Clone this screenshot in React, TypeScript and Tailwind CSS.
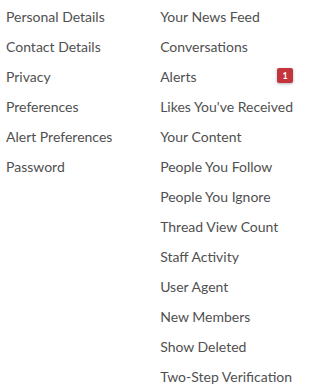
const left = [
  "Personal Details",
  "Contact Details",
  "Privacy",
  "Preferences",
  "Alert Preferences",
  "Password",
];

const right = [
  "Your News Feed",
  "Conversations",
  "Alerts",
  "Likes You've Received",
  "Your Content",
  "People You Follow",
  "People You Ignore",
  "Thread View Count",
  "Staff Activity",
  "User Agent",
  "New Members",
  "Show Deleted",
  "Two-Step Verification",
];

export default function App() {
  return (
    <div
      className="w-[300px] h-[390px] bg-white flex text-[14px] text-[#505050] whitespace-nowrap"
      style={{ fontFamily: "Lato, 'Noto Sans', sans-serif" }}
    >
      <ul className="w-[155px] pt-[1px]">
        {left.map((item) => (
          <li key={item} className="h-[30px] flex items-center pl-[6px]">
            {item}
          </li>
        ))}
      </ul>
      <ul className="flex-1 pt-[1px] pr-[7px]">
        {right.map((item) => (
          <li key={item} className="h-[30px] flex items-center justify-between pl-[6px]">
            <span>{item}</span>
            {item === "Alerts" && (
              <span className="w-[16px] h-[15px] mt-[-1px] rounded-[2px] bg-[#c4343c] text-white text-[9px] font-bold flex items-center justify-center shadow-[0_1px_3px_rgba(0,0,0,0.3)]">
                1
              </span>
            )}
          </li>
        ))}
      </ul>
    </div>
  );
}
